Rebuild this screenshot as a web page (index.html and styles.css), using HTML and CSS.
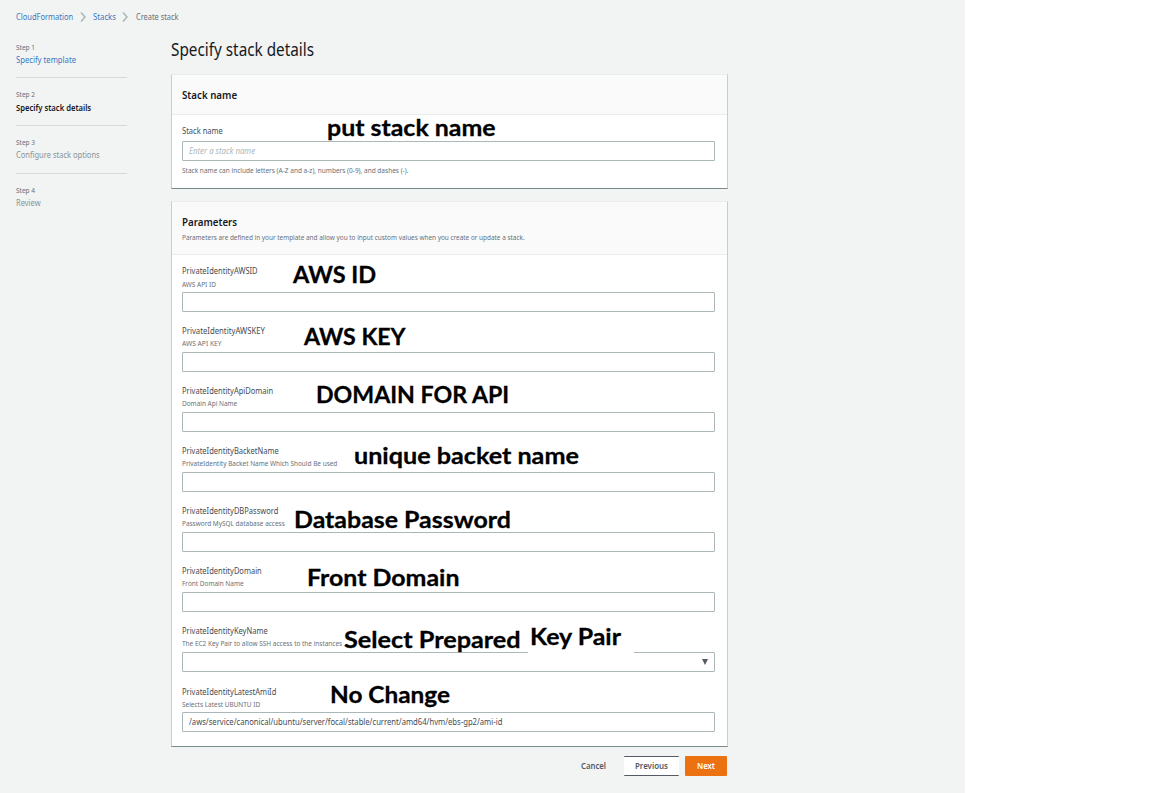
FILE: index.html
```html
<!DOCTYPE html>
<html lang="en">
<head>
<meta charset="utf-8">
<title>Create stack</title>
<link rel="stylesheet" href="styles.css">
</head>
<body>
<div class="page">
  <nav class="crumbs">
    <a class="crumb crumb-root"><span class="t">CloudFormation</span></a>
    <svg class="chev" viewBox="0 0 6 12"><path d="M1 1.5l4 4.5-4 4.5"/></svg>
    <a class="crumb crumb-stacks"><span class="t">Stacks</span></a>
    <svg class="chev" viewBox="0 0 6 12"><path d="M1 1.5l4 4.5-4 4.5"/></svg>
    <span class="crumb current"><span class="t">Create stack</span></span>
  </nav>
  <div class="columns">
    <aside class="steps">
      <div class="step"><div class="step-no"><span class="t">Step 1</span></div><div class="step-name link"><span class="t">Specify template</span></div></div>
      <div class="step"><div class="step-no"><span class="t">Step 2</span></div><div class="step-name active"><span class="t">Specify stack details</span></div></div>
      <div class="step"><div class="step-no"><span class="t">Step 3</span></div><div class="step-name"><span class="t">Configure stack options</span></div></div>
      <div class="step"><div class="step-no"><span class="t">Step 4</span></div><div class="step-name"><span class="t">Review</span></div></div>
    </aside>
    <main class="main">
      <h1 class="title"><span class="t">Specify stack details</span></h1>
      <section class="card">
        <header class="head"><h2 class="h2"><span class="t">Stack name</span></h2></header>
        <div class="body-name">
          <div class="label label-name"><span class="t">Stack name</span></div>
          <div class="input placeholder"><span class="t">Enter a stack name</span></div>
          <div class="hint"><span class="t">Stack name can include letters (A-Z and a-z), numbers (0-9), and dashes (-).</span></div>
        </div>
      </section>
      <section class="card">
        <header class="head head-params"><h2 class="h2"><span class="t">Parameters</span></h2><p class="sub"><span class="t">Parameters are defined in your template and allow you to input custom values when you create or update a stack.</span></p></header>
        <div class="fields">
          <div class="field field-id"><div class="label"><span class="t">PrivateIdentityAWSID</span></div><div class="desc"><span class="t">AWS API ID</span></div><div class="input"></div></div>
          <div class="field field-key"><div class="label"><span class="t">PrivateIdentityAWSKEY</span></div><div class="desc"><span class="t">AWS API KEY</span></div><div class="input"></div></div>
          <div class="field"><div class="label"><span class="t">PrivateIdentityApiDomain</span></div><div class="desc"><span class="t">Domain Api Name</span></div><div class="input"></div></div>
          <div class="field"><div class="label"><span class="t">PrivateIdentityBacketName</span></div><div class="desc"><span class="t">PrivateIdentity Backet Name Which Should Be used</span></div><div class="input"></div></div>
          <div class="field"><div class="label"><span class="t">PrivateIdentityDBPassword</span></div><div class="desc"><span class="t">Password MySQL database access</span></div><div class="input"></div></div>
          <div class="field"><div class="label"><span class="t">PrivateIdentityDomain</span></div><div class="desc"><span class="t">Front Domain Name</span></div><div class="input"></div></div>
          <div class="field"><div class="label"><span class="t">PrivateIdentityKeyName</span></div><div class="desc"><span class="t">The EC2 Key Pair to allow SSH access to the instances</span></div><div class="input select"><svg class="caret" viewBox="0 0 6 6"><path d="M0 0h6L3 6z"/></svg></div></div>
          <div class="field field-ami"><div class="label"><span class="t">PrivateIdentityLatestAmiId</span></div><div class="desc"><span class="t">Selects Latest UBUNTU ID</span></div><div class="input value"><span class="t">/aws/service/canonical/ubuntu/server/focal/stable/current/amd64/hvm/ebs-gp2/ami-id</span></div></div>
        </div>
      </section>
      <footer class="actions">
        <button class="btn cancel"><span class="t">Cancel</span></button>
        <button class="btn previous"><span class="t">Previous</span></button>
        <button class="btn next"><span class="t">Next</span></button>
      </footer>
    </main>
  </div>
</div>
<div class="note n1"><span class="t">put stack name</span></div>
<div class="note caps n2"><span class="t">AWS ID</span></div>
<div class="note caps n3"><span class="t">AWS KEY</span></div>
<div class="note caps n4"><span class="t">DOMAIN FOR API</span></div>
<div class="note n5"><span class="t">unique backet name</span></div>
<div class="note n6"><span class="t">Database Password</span></div>
<div class="note n7"><span class="t">Front Domain</span></div>
<div class="note n8"><span class="t">Select Prepared</span></div>
<div class="note n9"><span class="t">Key Pair</span></div>
<div class="note n10"><span class="t">No Change</span></div>
</body>
</html>
```
FILE: styles.css
```css
* { box-sizing: border-box; }
body { margin: 0; width: 1159px; height: 793px; overflow: hidden; background: #fff; font-family: "Noto Sans", sans-serif; font-size: 8.5px; color: #545b64; position: relative; }
h1, h2, p { margin: 0; font-weight: 400; }
.page { width: 965px; height: 793px; background: #f2f3f3; padding: 9px 16px 0; }

/* Condensed text: --s is the horizontal scale of the face */
.t { display: inline-block; white-space: nowrap; transform-origin: 0 50%; transform: scaleX(var(--s, .885)); }

.crumbs { display: flex; align-items: center; height: 16px; line-height: 16px; color: #687078; }
.crumb { height: 16px; white-space: nowrap; }
.crumb-root { width: 64px; color: #3b78c0; }
.crumb-stacks { width: 29px; margin-left: 7px; color: #3b78c0; --s: .91; }
.current { margin-left: 8px; --s: .87; }
.chev { width: 6px; height: 12px; flex: none; fill: none; stroke: #aab7b8; stroke-width: 1.6; }

.columns { display: grid; grid-template-columns: 111px 557px; column-gap: 44px; }
.steps { padding-top: 5px; }
.step { height: 48px; padding-top: 10px; line-height: 12px; color: #879596; border-bottom: 1px solid #d5dbdb; }
.step:first-child { padding-top: 11px; }
.step:last-child { border: 0; }
.step-no { font-size: 7.5px; color: #687078; margin-bottom: 1px; --s: .87; }
.link { color: #3b78c0; --s: .905; }
.active { color: #16191f; font-weight: 600; --s: .9; padding-top: 1px; }

.title { font-size: 18px; line-height: 24px; padding: 12px 0 13px; color: #16191f; --s: .85; }
.card { background: #fff; border: 1px solid #c6cece; border-top-color: #eaeded; border-bottom-color: #788a8c; margin-bottom: 12px; }
.head { background: #fafafa; border-bottom: 1px solid #eaeded; height: 40px; padding: 12px 10px 0; }
.head-params { height: 53px; }
.h2 { font-size: 11px; line-height: 16px; font-weight: 600; color: #16191f; --s: .885; }
.sub, .desc, .hint { font-size: 7.5px; color: #687078; line-height: 12px; --s: .86; }
.sub { margin-top: 1px; --s: .855; }
.hint { margin-top: 3px; --s: .868; }
.label { line-height: 16px; color: #444c55; }
.label-name { height: 18px; }
.body-name { height: 73px; padding: 8px 12px 0 10px; }
.input { height: 20px; border: 1px solid #aab7b8; border-radius: 1px; line-height: 18px; padding: 0 6px; background: #fff; }
.placeholder { font-style: italic; color: #aab7b8; --s: .917; }
.value { --s: .9; color: #444c55; }
.fields { padding: 8px 12px 3px 10px; }
.field { height: 60px; }
.field-key .label { --s: .911; }
.field-key .desc { --s: .89; }
.desc { height: 13px; line-height: 8px; }
.field-id .desc { line-height: 10px; }
.field-ami .label { height: 17px; line-height: 18px; }
.field-ami .desc { height: 12px; }
.select { display: flex; justify-content: flex-end; align-items: center; }
.caret { width: 6px; height: 6px; fill: #545b64; }

.actions { display: flex; margin-top: -3px; padding-left: 410px; }
.btn { font: 600 8.5px/18px "Noto Sans", sans-serif; border: 0; background: none; height: 20px; padding: 0; color: #545b64; text-align: left; }
.cancel { width: 43px; --s: .91; }
.previous { width: 55px; padding-left: 11px; background: #fff; border: solid #545b64; border-width: 1px 0; border-radius: 1px; --s: .93; }
.next { width: 42px; margin-left: 6px; padding-left: 12px; color: #fff; background: #ec7211; border-radius: 1px; --s: .91; }

/* Callouts laid over the form */
.note { position: absolute; font: 700 23.5px/30px Lato, sans-serif; color: #000; -webkit-text-stroke: .3px #000; --s: 1.06; }
.caps { --s: .985; }
.n1 { left: 327px; top: 112px; }
.n2 { left: 293px; top: 259px; --s: 1; }
.n3 { left: 304px; top: 321px; }
.n4 { left: 316px; top: 379px; }
.n5 { left: 354px; top: 440px; --s: 1.07; }
.n6 { left: 294px; top: 504px; }
.n7 { left: 307px; top: 562px; }
.n8 { left: 344px; top: 624px; --s: 1.074; }
.n9 { left: 528px; top: 621px; width: 106px; height: 32px; padding-left: 2px; background: #fff; }
.n10 { left: 330px; top: 679px; --s: 1.037; }
```
